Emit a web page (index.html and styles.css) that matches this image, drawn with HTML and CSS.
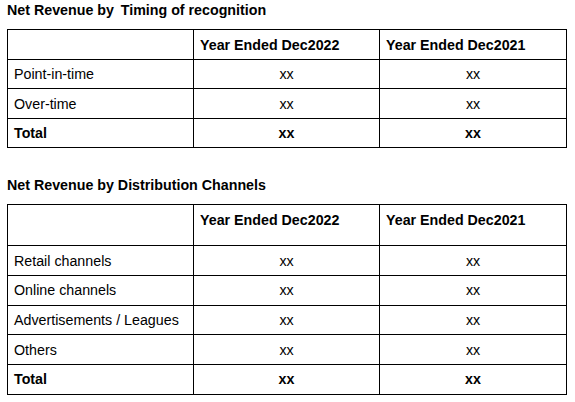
FILE: index.html
```html
<!DOCTYPE html>
<html lang="en">
<head>
<meta charset="utf-8">
<title>Net Revenue</title>
<link rel="stylesheet" href="styles.css">
</head>
<body>
<div class="page">
  <section class="block">
    <h2 class="title">Net Revenue by&thinsp; Timing of recognition</h2>
    <table class="rev rev-timing">
      <colgroup><col class="c1"><col class="c2"><col class="c3"></colgroup>
      <thead>
        <tr><th></th><th>Year Ended Dec2022</th><th>Year Ended Dec2021</th></tr>
      </thead>
      <tbody>
        <tr><td>Point-in-time</td><td>xx</td><td>xx</td></tr>
        <tr><td>Over-time</td><td>xx</td><td>xx</td></tr>
        <tr class="total"><td>Total</td><td>xx</td><td>xx</td></tr>
      </tbody>
    </table>
  </section>
  <section class="block block-second">
    <h2 class="title">Net Revenue by Distribution Channels</h2>
    <table class="rev rev-channels">
      <colgroup><col class="c1"><col class="c2"><col class="c3"></colgroup>
      <thead>
        <tr><th></th><th>Year Ended Dec2022</th><th>Year Ended Dec2021</th></tr>
      </thead>
      <tbody>
        <tr><td>Retail channels</td><td>xx</td><td>xx</td></tr>
        <tr><td>Online channels</td><td>xx</td><td>xx</td></tr>
        <tr><td>Advertisements / Leagues</td><td>xx</td><td>xx</td></tr>
        <tr><td>Others</td><td>xx</td><td>xx</td></tr>
        <tr class="total"><td>Total</td><td>xx</td><td>xx</td></tr>
      </tbody>
    </table>
  </section>
</div>
</body>
</html>
```

FILE: styles.css
```css
html, body {
  margin: 0;
  padding: 0;
  background: #ffffff;
}

body {
  font-family: "Liberation Sans", Arial, sans-serif;
  font-size: 14.25px;
  line-height: 16px;
  color: #000000;
}

.page {
  padding: 2px 0 0 7px;
}

.block-second {
  margin-top: 29px;
}

.title {
  margin: 0 0 11px 0;
  font-size: 14.25px;
  line-height: 16px;
  font-weight: bold;
}

.rev {
  border-collapse: collapse;
  table-layout: fixed;
  width: 560px;
}

.rev .c1 { width: 186px; }
.rev .c2 { width: 186px; }
.rev .c3 { width: 187px; }

.rev th,
.rev td {
  border: 1px solid #000000;
  padding: 0 6px;
  height: 28.4px;
  font-size: 14.25px;
  line-height: 16px;
}

.rev th {
  text-align: left;
  font-weight: bold;
  height: 29px;
  vertical-align: middle;
}

.rev td {
  text-align: center;
  vertical-align: middle;
}

.rev td:first-child {
  text-align: left;
}

.rev .total td {
  font-weight: bold;
}

.rev-channels th {
  height: 33px;
  padding-top: 7px;
  vertical-align: top;
}

.rev-channels td {
  height: 28.7px;
}
```
